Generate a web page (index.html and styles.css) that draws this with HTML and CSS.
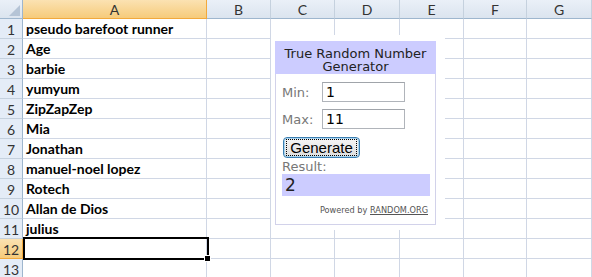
FILE: index.html
```html
<!DOCTYPE html>
<html lang="en">
<head>
  <meta charset="UTF-8" />
  <title>Book1 - Random Number Generator</title>
  <link rel="stylesheet" href="styles.css">
</head>
<body>
  <div class="sheet">
    <div class="grid">
      <div class="hd corner"><span class="tri"></span></div>
      <div class="hd col sel">A</div>
      <div class="hd col">B</div>
      <div class="hd col">C</div>
      <div class="hd col">D</div>
      <div class="hd col">E</div>
      <div class="hd col">F</div>
      <div class="hd col">G</div>

      <div class="hd num">1</div><div class="cell">pseudo barefoot runner</div><div class="cell"></div><div class="cell"></div><div class="cell"></div><div class="cell"></div><div class="cell"></div><div class="cell"></div>
      <div class="hd num">2</div><div class="cell">Age</div><div class="cell"></div><div class="cell"></div><div class="cell"></div><div class="cell"></div><div class="cell"></div><div class="cell"></div>
      <div class="hd num">3</div><div class="cell">barbie</div><div class="cell"></div><div class="cell"></div><div class="cell"></div><div class="cell"></div><div class="cell"></div><div class="cell"></div>
      <div class="hd num">4</div><div class="cell">yumyum</div><div class="cell"></div><div class="cell"></div><div class="cell"></div><div class="cell"></div><div class="cell"></div><div class="cell"></div>
      <div class="hd num">5</div><div class="cell">ZipZapZep</div><div class="cell"></div><div class="cell"></div><div class="cell"></div><div class="cell"></div><div class="cell"></div><div class="cell"></div>
      <div class="hd num">6</div><div class="cell">Mia</div><div class="cell"></div><div class="cell"></div><div class="cell"></div><div class="cell"></div><div class="cell"></div><div class="cell"></div>
      <div class="hd num">7</div><div class="cell">Jonathan</div><div class="cell"></div><div class="cell"></div><div class="cell"></div><div class="cell"></div><div class="cell"></div><div class="cell"></div>
      <div class="hd num">8</div><div class="cell">manuel-noel lopez</div><div class="cell"></div><div class="cell"></div><div class="cell"></div><div class="cell"></div><div class="cell"></div><div class="cell"></div>
      <div class="hd num">9</div><div class="cell">Rotech</div><div class="cell"></div><div class="cell"></div><div class="cell"></div><div class="cell"></div><div class="cell"></div><div class="cell"></div>
      <div class="hd num">10</div><div class="cell">Allan de Dios</div><div class="cell"></div><div class="cell"></div><div class="cell"></div><div class="cell"></div><div class="cell"></div><div class="cell"></div>
      <div class="hd num">11</div><div class="cell">julius</div><div class="cell"></div><div class="cell"></div><div class="cell"></div><div class="cell"></div><div class="cell"></div><div class="cell"></div>
      <div class="hd num sel">12</div><div class="cell"></div><div class="cell"></div><div class="cell"></div><div class="cell"></div><div class="cell"></div><div class="cell"></div><div class="cell"></div>
      <div class="hd num">13</div><div class="cell"></div><div class="cell"></div><div class="cell"></div><div class="cell"></div><div class="cell"></div><div class="cell"></div><div class="cell"></div>
    </div>

    <!-- embedded widget, floats over the cells -->
    <div class="object">
      <div class="rng">
        <div class="rng-title">True Random Number Generator</div>
        <div class="rng-body">
          <div class="field"><span class="lbl">Min:</span><span class="box">1</span></div>
          <div class="field"><span class="lbl">Max:</span><span class="box">11</span></div>
          <button class="gen"><span class="focus">Generate</span></button>
          <div class="lbl result-lbl">Result:</div>
          <div class="result">2</div>
          <div class="powered">Powered by <u>RANDOM.ORG</u></div>
        </div>
      </div>
    </div>

    <div class="selection"><span class="handle"></span></div>
  </div>
</body>
</html>
```

FILE: styles.css
```css
body {
  margin: 0;
  background: #fff;
}
.sheet {
  position: relative;
  width: 592px;
  height: 277px;
  overflow: hidden;
  font-family: Lato, 'Liberation Sans', sans-serif;
}
.grid {
  display: grid;
  grid-template-columns: 23px 184px 64px 64px 65px 64px 63px 65px;
  grid-template-rows: 19px repeat(13, 20px);
}
.cell {
  box-sizing: border-box;
  border-right: 1px solid #d0d7e5;
  border-bottom: 1px solid #d0d7e5;
  display: flex;
  align-items: flex-end;
  padding: 0 0 1px 3px;
  font-size: 14px;
  font-weight: bold;
  line-height: 17px;
  color: #000;
  white-space: nowrap;
}
.hd {
  box-sizing: border-box;
  background: linear-gradient(#eaf0f8, #dbe4ef);
  color: #333;
  font-size: 14px;
  display: flex;
  align-items: center;
  justify-content: center;
}
.col {
  border-right: 1px solid #c5d1de;
  border-bottom: 1px solid #9eb6ce;
}
.num {
  background: #e4ecf7;
  border-right: 1px solid #9eb6ce;
  border-bottom: 1px solid #c5d1de;
  padding-top: 1px;
}
.hd.sel {
  background: linear-gradient(#fbe2b2, #f6cb7b);
  border-color: #f2a93c;
}
.corner {
  position: relative;
  border-right: 1px solid #9eb6ce;
  border-bottom: 1px solid #9eb6ce;
}
.tri {
  position: absolute;
  right: 2px;
  bottom: 2px;
  border-style: solid;
  border-width: 0 0 11px 11px;
  border-color: transparent transparent #b5c4d6 transparent;
}

/* widget */
.object {
  position: absolute;
  left: 271px;
  top: 35px;
  width: 174px;
  height: 195px;
  background: #fff;
}
.rng {
  box-sizing: border-box;
  width: 161px;
  height: 184px;
  margin: 6px 0 0 4px;
  border: 1px solid #d2d2ea;
  font-family: 'DejaVu Sans', Verdana, sans-serif;
}
.rng-title {
  box-sizing: border-box;
  height: 33px;
  margin: -1px -1px 0;
  padding: 6px 8px 0;
  background: #ccccff;
  color: #222;
  font-size: 13px;
  line-height: 13px;
  text-align: center;
}
.rng-body {
  padding: 8px 5px 0 6px;
}
.field {
  display: flex;
  align-items: center;
  margin-bottom: 7px;
}
.lbl {
  color: #777;
  font-size: 13px;
}
.field .lbl {
  width: 40px;
}
.box {
  box-sizing: border-box;
  width: 83px;
  height: 20px;
  border: 1px solid #b0b4ba;
  border-top-color: #a0a4aa;
  padding: 1px 0 0 3px;
  font-size: 14px;
  line-height: 17px;
  color: #000;
}
.gen {
  box-sizing: border-box;
  width: 77px;
  height: 21px;
  margin: 1px 0 0 1px;
  padding: 1px 3px;
  border: 1px solid #3c7fb1;
  border-radius: 4px;
  background: linear-gradient(#f6f6f6, #dedede);
  box-shadow: inset 0 0 0 1px #a8d4f0;
  font-family: 'Liberation Sans', Arial, sans-serif;
  font-size: 15px;
  line-height: 15px;
  color: #000;
}
.focus {
  display: block;
  outline: 1px dotted #000;
}
.result-lbl {
  margin-top: 2px;
  line-height: 13px;
}
.result {
  box-sizing: border-box;
  height: 22px;
  margin-top: 1px;
  padding-left: 3px;
  background: #ccccff;
  color: #222;
  font-size: 17px;
  line-height: 22px;
}
.powered {
  margin-top: 9px;
  padding-right: 2px;
  text-align: right;
  color: #555;
  font-size: 8.2px;
}

.selection {
  position: absolute;
  left: 23px;
  top: 237px;
  width: 186px;
  height: 23px;
  box-sizing: border-box;
  border: 2px solid #000;
}
.handle {
  position: absolute;
  right: -4px;
  bottom: -4px;
  width: 5px;
  height: 5px;
  background: #000;
  border: 1px solid #fff;
}
```
